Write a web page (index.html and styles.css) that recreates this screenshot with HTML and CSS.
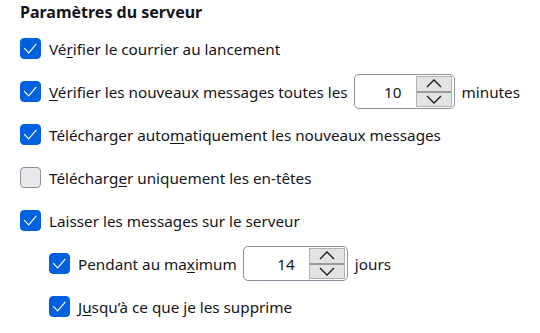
FILE: index.html
```html
<!DOCTYPE html>
<html>
<head>
  <meta charset="UTF-8">
  <title>Paramètres du serveur</title>
  <link rel="stylesheet" href="styles.css">
</head>
<body>
  <h1>Paramètres du serveur</h1>

  <div class="row">
    <span class="check on"></span>
    <span>Vé<u>r</u>ifier le courrier au lancement</span>
  </div>
  <div class="row">
    <span class="check on"></span>
    <span><u>V</u>érifier les nouveaux messages toutes les</span>
    <span class="spin">
      <span class="spin-value">10</span>
      <span class="spin-buttons">
        <span class="spin-btn up"></span>
        <span class="spin-btn down"></span>
      </span>
    </span>
    <span>minutes</span>
  </div>
  <div class="row">
    <span class="check on"></span>
    <span>Télécharger auto<u>m</u>atiquement les nouveaux messages</span>
  </div>
  <div class="row">
    <span class="check"></span>
    <span>Télécharg<u>e</u>r uniquement les en-têtes</span>
  </div>
  <div class="row">
    <span class="check on"></span>
    <span>Laisser les messa<u>g</u>es sur le serveur</span>
  </div>
  <div class="row nested">
    <span class="check on"></span>
    <span>Pendant au ma<u>x</u>imum</span>
    <span class="spin">
      <span class="spin-value">14</span>
      <span class="spin-buttons">
        <span class="spin-btn up"></span>
        <span class="spin-btn down"></span>
      </span>
    </span>
    <span>jours</span>
  </div>
  <div class="row nested">
    <span class="check on"></span>
    <span>J<u>u</u>squ’à ce que je les supprime</span>
  </div>
</body>
</html>
```
FILE: styles.css
```css
body {
  margin: 0;
  padding: 0 20px;
  font-family: "Noto Sans", sans-serif;
  font-size: 15.25px;
  color: #15141a;
  background-color: #fff;
}
h1 {
  margin: 0;
  height: 27px;
  font-size: 16px;
  font-weight: bold;
  line-height: 24px;
}
.row {
  display: flex;
  align-items: center;
  height: 43px;
  white-space: nowrap;
}
.row.nested {
  padding-left: 29px;
}
.check {
  box-sizing: border-box;
  width: 21px;
  height: 21px;
  margin-right: 8px;
  border: 1px solid #8f8f9d;
  border-radius: 4px;
  background-color: #e9e9ed;
  flex-shrink: 0;
}
.check.on {
  border-color: #0061e0;
  background-color: #0061e0;
  background-image: url("data:image/svg+xml,%3Csvg xmlns='http://www.w3.org/2000/svg' viewBox='0 0 21 21'%3E%3Cpath d='M3.5 10l5 5.3 8.5-10' fill='none' stroke='white' stroke-width='1.3'/%3E%3C/svg%3E");
}
u {
  text-decoration-thickness: 1px;
  text-underline-offset: 2px;
}
.spin {
  box-sizing: border-box;
  display: flex;
  align-items: center;
  width: 105px;
  height: 35px;
  margin: 0 7px 0 6px;
  padding: 1px 2px 1px 0;
  border: 1px solid #8f8f9d;
  border-radius: 5px;
}
.spin-value {
  flex: 1;
  text-align: right;
  padding-right: 14px;
}
.spin-buttons {
  display: flex;
  flex-direction: column;
  width: 36px;
  height: 31px;
  background-color: #e3e3e3;
  border: 1px solid #b0b0b0;
  box-sizing: border-box;
}
.spin-btn {
  flex: 1;
  background-repeat: no-repeat;
  background-position: center;
}
.spin-btn.up {
  border-bottom: 2px solid #9a9a9a;
  background-image: url("data:image/svg+xml,%3Csvg xmlns='http://www.w3.org/2000/svg' width='16' height='9' viewBox='0 0 16 9'%3E%3Cpath d='M1 8l7-7 7 7' fill='none' stroke='%2315141a' stroke-width='1.3'/%3E%3C/svg%3E");
}
.spin-btn.down {
  background-image: url("data:image/svg+xml,%3Csvg xmlns='http://www.w3.org/2000/svg' width='16' height='9' viewBox='0 0 16 9'%3E%3Cpath d='M1 1l7 7 7-7' fill='none' stroke='%2315141a' stroke-width='1.3'/%3E%3C/svg%3E");
}
```
